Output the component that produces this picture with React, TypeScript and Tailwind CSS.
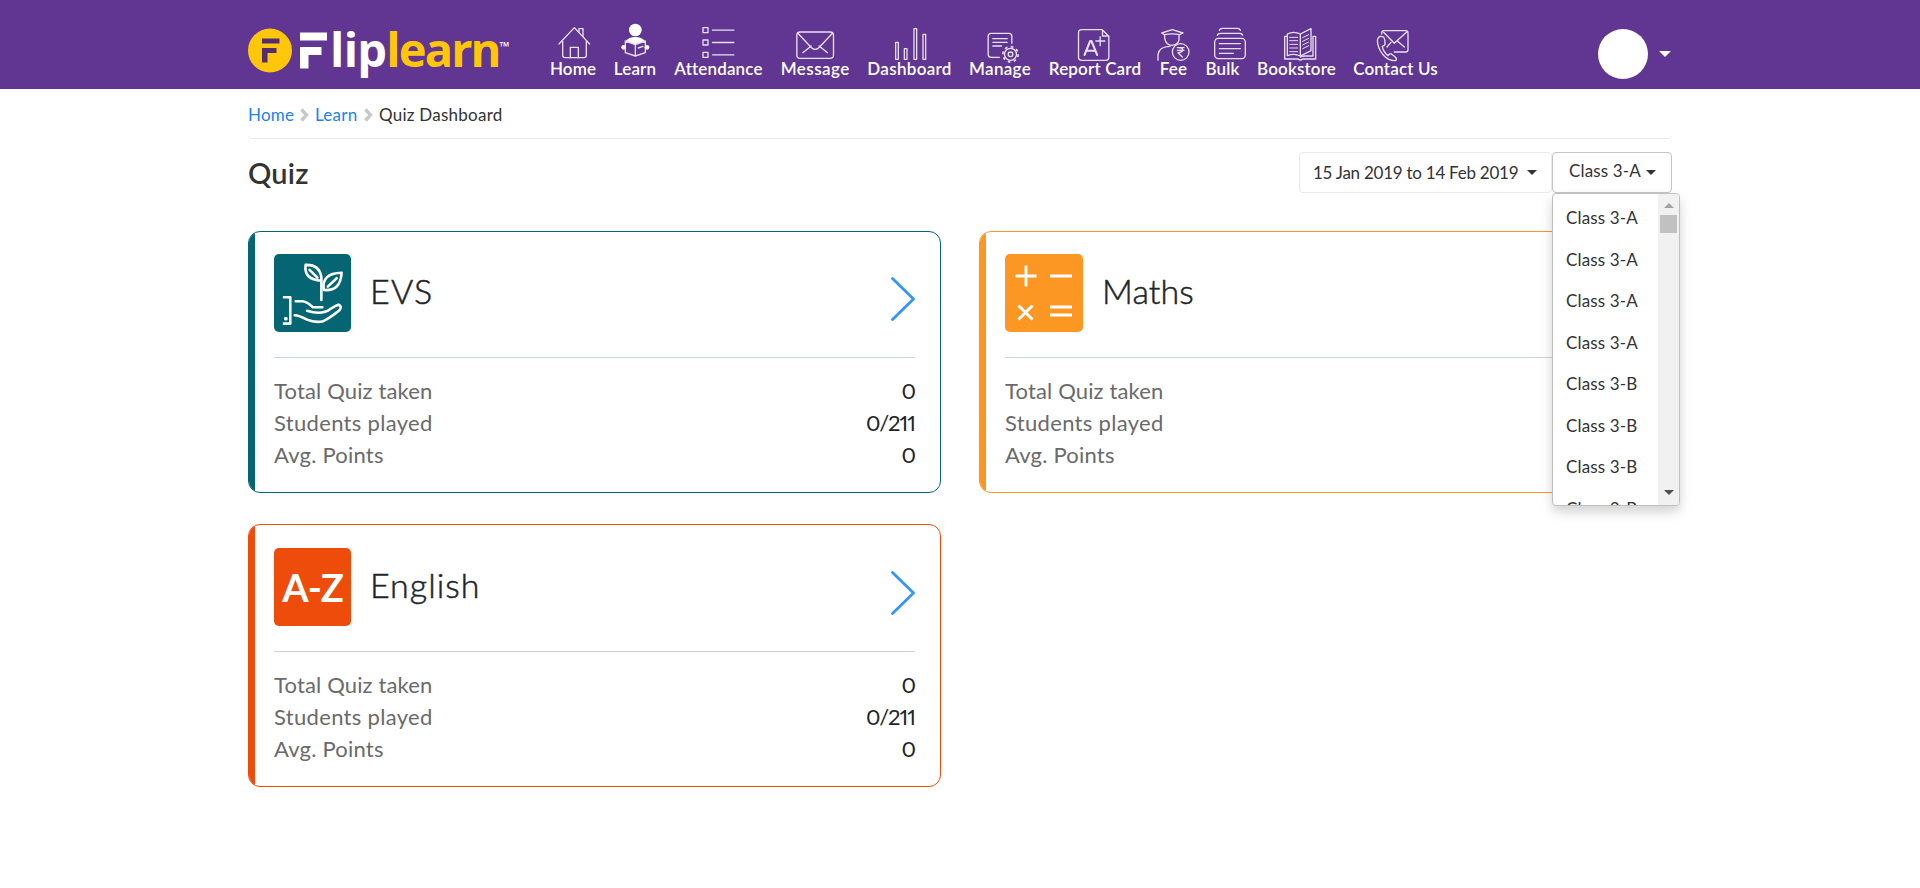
import React from "react";

type NavItem = { label: string; width: string; view: string; tracking?: string; icon: React.ReactNode };

const nav: NavItem[] = [
  {
    label: "Home",
    width: "w-[46px]",
    view: "69 42 120 120",
    icon: (
      <>
        <path d="M87 102 133 53 179 102" />
        <path d="M147 66V56h12v23" />
        <path d="M98 94v42q0 7 7 7h57q7 0 7-7V94" />
        <path d="M121 143v-31h24v31" />
      </>
    ),
  },
  {
    label: "Learn",
    width: "w-[42px]",
    view: "255 42 120 120",
    icon: (
      <>
        <circle cx="316" cy="60" r="19" fill="#fff" stroke="none" />
        <path d="M287 94q9-13 29-13t29 13l-29 9z" fill="#fff" stroke="none" />
        <path d="M286 93 316 104 346 93V128L316 138 286 128z" fill="#613592" />
        <path d="M316 104v33M325 114l14-5" />
        <circle cx="281" cy="112" r="7" fill="#fff" stroke="none" />
        <circle cx="351" cy="112" r="7" fill="#fff" stroke="none" />
      </>
    ),
  },
  {
    label: "Attendance",
    width: "w-[89px]",
    view: "505.5 42 120 120",
    icon: (
      <>
        <path d="M517.500 53h15v15h-15zM517.500 90h15v15h-15zM517.500 127h15v15h-15z" />
        <path d="M546 60.500h64M546 97.500h64M546 134.500h64" />
      </>
    ),
  },
  {
    label: "Message",
    width: "w-[68.500px]",
    view: "796.5 42 120 120",
    tracking: "tracking-[0.450px]",
    icon: (
      <>
        <rect x="802" y="66" width="110" height="79" rx="10" />
        <path d="M805 70 846 113q11 10 22 0L909 70M820 128l25-20M894 128l-25-20" />
      </>
    ),
  },
  {
    label: "Dashboard",
    width: "w-[84px]",
    view: "120 42 120 120",
    tracking: "tracking-[0.300px]",
    icon: <path d="M137 97h8v51h-8zM163 116h8v32h-8zM192 56h8v92h-8zM219 73h8v75h-8z" />,
  },
  {
    label: "Manage",
    width: "w-[61px]",
    view: "391.5 42 120 120",
    tracking: "tracking-[0.300px]",
    icon: (
      <>
        <path d="M487 100V79q0-9-9-9h-53q-9 0-9 9v54q0 9 9 9h25" />
        <path d="M430 86h43M430 97h43M430 108h26" />
        <circle cx="483" cy="133" r="18" />
        <circle cx="483" cy="133" r="7" />
        <circle cx="483" cy="133" r="23" strokeWidth="5" strokeLinecap="butt" strokeDasharray="8 10.060" />
      </>
    ),
  },
  {
    label: "Report Card",
    width: "w-[93px]",
    view: "676.5 42 120 120",
    icon: (
      <>
        <path d="M758 59h-62q-9 0-9 9v74q0 9 9 9h73q9 0 9-9V79zM759 60v18h18" />
        <path d="M705 135 722 93h4l17 42M711 122h26" strokeWidth="6" />
        <path d="M739 93h27M752 80v27" />
      </>
    ),
  },
  {
    label: "Fee",
    width: "w-[28px]",
    view: "42 42 120 120",
    icon: (
      <>
        <path d="M65 69 97 59l32 10-10 5q-23-5-46 0zM74 75v10q4 20 22 21 16-1 21-15V75" />
        <path d="M54 151v-17q2-24 36-25" />
        <circle cx="122" cy="126" r="25" fill="#613592" />
        <path d="M112 113h20M112 121h20M115 113q13 0 13 7t-14 8l13 13" />
      </>
    ),
  },
  {
    label: "Bulk",
    width: "w-[34px]",
    view: "189 42 120 120",
    icon: (
      <>
        <rect x="224" y="85" width="92" height="61" rx="11" />
        <path d="M232 76q2-6 9-6h59q6 0 8 6M238 61q2-6 9-6h46q6 0 8 6" />
        <path d="M238 101h63M238 116h63M238 130h42" />
      </>
    ),
  },
  {
    label: "Bookstore",
    width: "w-[78px]",
    view: "411 42 120 120",
    icon: (
      <>
        <path d="M442 137V72q19-10 39 0v66q-19-9-39-1zM481 72l32-16v66l-32 16" />
        <path d="M442 79h-8v68h40q7 6 14 0h39V79h-8v59h-25q-7 0-13 3" />
        <path d="M449 82h24M449 92h24M449 103h24M449 114h24M449 125h24" strokeWidth="3" />
        <path d="M488 83l18-9M488 94l18-9M488 105l18-9M488 116l18-9" strokeWidth="3" />
      </>
    ),
  },
  {
    label: "Contact Us",
    width: "w-[84px]",
    view: "708 42 120 120",
    icon: (
      <>
        <path d="M725 72v-4q0-6 7-6h65q7 0 7 7v50q0 7-7 7h-34" />
        <path d="M730 66l33 34 37-34M741 111l12-14M793 111l-20-17" />
        <path d="M719 79q-9 7-6 22 5 24 23 40 17 14 32 10 3-6-3-11l-12-9q-5 0-9 6-15-13-17-28 9-3 8-8 0-19-7-21z" />
      </>
    ),
  },
];

function Caret({ className = "" }: { className?: string }) {
  return <span className={`block h-0 w-0 border-x-[5px] border-t-[5px] border-x-transparent ${className}`} />;
}

function Header() {
  return (
    <header className="h-[89px] bg-[#613592]">
      <div className="mx-auto flex w-[1424px] items-start">
        <div className="flex h-[89px] w-[302px] shrink-0 items-start pt-7">
          <svg width="82" height="46" viewBox="0 0 82 46" className="shrink-0">
            <circle cx="22" cy="22.500" r="22" fill="#ffc60a" />
            <path d="M14 10.500h17.500v5H14zM14 20h14.500v5H19.500v9.500H14z" fill="#552d6e" />
            <path d="M52 4.500h27v8H52zM52 19h21.500v8H60.500v13.500H52z" fill="#fff" />
          </svg>
          <div className="-mt-[6px] flex items-start whitespace-nowrap font-['Open_Sans',sans-serif] text-[47px] font-bold leading-[54px] -tracking-[0.700px] text-white">
            <span>lip</span>
            <span className="-tracking-[1.900px] text-[#ffc60a]">learn</span>
            <span className="mt-[14px] text-[13px] leading-[20px] tracking-normal">™</span>
          </div>
        </div>
        <nav className="flex gap-[18px] pt-6">
          {nav.map((n) => (
            <a key={n.label} className={`flex flex-col items-center ${n.width}`}>
              <svg
                width="40"
                height="40"
                viewBox={n.view}
                fill="none"
                stroke="#e8e0f1"
                strokeWidth="4"
                strokeLinecap="round"
                strokeLinejoin="round"
                className="shrink-0 overflow-visible"
              >
                {n.icon}
              </svg>
              <span className={`-mt-[5px] whitespace-nowrap text-[17px] font-semibold leading-5 text-white ${n.tracking ?? "tracking-[0.150px]"}`}>
                {n.label}
              </span>
            </a>
          ))}
        </nav>
        <div className="ml-auto mr-px flex items-center gap-[11px] pt-[29px]">
          <span className="h-[50px] w-[50px] rounded-full bg-white" />
          <span className="block h-0 w-0 border-x-[6px] border-t-[6px] border-x-transparent border-t-white" />
        </div>
      </div>
    </header>
  );
}

function Chevron() {
  return (
    <svg width="9" height="14" viewBox="0 0 9 14" fill="none" stroke="#c8c8c8" strokeWidth="3.400">
      <path d="M1.500 1.500 6.500 7 1.500 12.500" />
    </svg>
  );
}

function Breadcrumb() {
  return (
    <div className="flex h-[50px] items-center rounded border-b border-[#e9ecec] pt-[2px] text-[17px] tracking-[0.250px] text-[#333]">
      <a className="w-[52px] text-[#2080f5]">Home</a>
      <Chevron />
      <a className="ml-[6px] w-[49px] text-[#2080f5]">Learn</a>
      <Chevron />
      <span className="ml-[6px]">Quiz Dashboard</span>
    </div>
  );
}

const classes = ["Class 3-A", "Class 3-A", "Class 3-A", "Class 3-A", "Class 3-B", "Class 3-B", "Class 3-B", "Class 3-B"];

function ClassMenu() {
  return (
    <div className="absolute left-0 top-[41px] z-10 flex h-[313px] w-[128px] overflow-hidden rounded border border-[#c0c0c0] bg-white shadow-[0_6px_12px_rgba(0,0,0,0.175)]">
      <ul className="flex-1 overflow-hidden pt-[3px]">
        {classes.map((c, i) => (
          <li key={i} className="h-[41.500px] whitespace-nowrap pl-[13px] leading-[41.500px]">
            {c}
          </li>
        ))}
      </ul>
      <div className="flex w-[21px] flex-col items-center bg-[#f1f1f1]">
        <span className="mt-[9px] block h-0 w-0 border-x-[5px] border-b-[5px] border-x-transparent border-b-[#a3a3a3]" />
        <span className="mt-[7px] h-[18px] w-[17px] bg-[#c1c1c1]" />
        <Caret className="mb-[10px] mt-auto border-t-[#505050]" />
      </div>
    </div>
  );
}

function TitleBar() {
  return (
    <div className="flex h-[92px] items-start justify-between pt-[13px] text-[#333]">
      <h1 className="pt-px text-[29px] font-semibold leading-10 tracking-[0.200px]">Quiz</h1>
      <div className="flex text-[17px]">
        <div className="flex h-[41px] w-[253px] items-center rounded border border-[#e9e9e9] pl-[13px]">
          <span className="w-[214px] whitespace-nowrap pt-px -tracking-[0.250px]">15 Jan 2019 to 14 Feb 2019</span>
          <Caret className="border-t-[#333]" />
        </div>
        <div className="relative h-[41px] w-[120px] tracking-[0.150px]">
          <div className="flex h-full items-center rounded border border-[#c4c4c4] bg-white pb-[3px] pl-4">
            <span className="w-[77px]">Class 3-A</span>
            <Caret className="mt-[3px] border-t-[#333]" />
          </div>
          <ClassMenu />
        </div>
      </div>
    </div>
  );
}

const EvsIcon = (
  <svg viewBox="0 0 78 78" className="h-full w-full" fill="none" stroke="#fff" strokeWidth="2.600" strokeLinecap="round" strokeLinejoin="round">
    <path d="M48 46V23Q46 10 32 10.500q-2 15 16 16M36 15.500l8 8" />
    <path d="M50.500 36q-3-17 18-17.500-1 19-18 17.500zM54.500 32.500l9-8.500" />
    <path d="M9 43.300h7.500V70H9" strokeLinecap="butt" />
    <circle cx="12" cy="65" r="1.900" fill="#fff" stroke="none" />
    <path d="M22 47.300h7Q34 48 39.500 53.500H49M33.500 57q15 5 24-2 5-3.500 8-4.200 4 2 .5 6-8.500 7-16 10.700-8 2-16.500-1.500Q25 61.500 21 61.500" />
  </svg>
);

const MathsIcon = (
  <svg viewBox="0 0 78 78" className="h-full w-full" fill="none" stroke="#fff" strokeWidth="2.900">
    <path d="M10.500 22h21M21 11.500v21M45 22h22M45 53h22M45 61h22M13.500 51.500l14 14M27.500 51.500l-14 14" />
  </svg>
);

type Subject = {
  name: string;
  frame: string;
  fill: string;
  pad: string;
  tileWidth: string;
  tracking: string;
  icon: React.ReactNode;
  values: string[];
};

const subjects: Subject[] = [
  {
    name: "EVS",
    frame: "h-[262px] border-[#066572]",
    fill: "bg-[#066572]",
    pad: "pt-[22px]",
    tileWidth: "w-[77px]",
    tracking: "tracking-[1.200px]",
    icon: EvsIcon,
    values: ["0", "0/211", "0"],
  },
  {
    name: "Maths",
    frame: "h-[262px] border-[#fb9722]",
    fill: "bg-[#fb9722]",
    pad: "pt-[22px]",
    tileWidth: "w-[78px]",
    tracking: "tracking-[0.100px]",
    icon: MathsIcon,
    values: [],
  },
  {
    name: "English",
    frame: "h-[263px] border-[#ee4c0a]",
    fill: "bg-[#ee4c0a]",
    pad: "pt-[23px]",
    tileWidth: "w-[77px]",
    tracking: "tracking-[1px]",
    icon: <span className="whitespace-nowrap text-[38px] font-bold leading-none -tracking-[1px] text-white">A-Z</span>,
    values: ["0", "0/211", "0"],
  },
];

const labels = [
  { text: "Total Quiz taken", tracking: "tracking-[0.150px]" },
  { text: "Students played", tracking: "tracking-[0.320px]" },
  { text: "Avg. Points", tracking: "tracking-[0.220px]" },
];

function Card({ s }: { s: Subject }) {
  return (
    <section className={`flex overflow-hidden rounded-xl border bg-white ${s.frame}`}>
      <div className={`w-[6px] shrink-0 ${s.fill}`} />
      <div className={`flex-1 pl-[19px] pr-[25px] ${s.pad}`}>
        <div className="flex h-[104px] items-start border-b border-[#c9d5dc]">
          <div className={`flex h-[78px] shrink-0 items-center justify-center rounded-[5px] ${s.tileWidth} ${s.fill}`}>{s.icon}</div>
          <h2 className={`ml-[19px] pt-[16px] text-[34px] font-light leading-[42px] text-[#212529] [-webkit-text-stroke:0.5px_#212529] ${s.tracking}`}>
            {s.name}
          </h2>
          <svg width="24" height="44" viewBox="0 0 24 44" className="ml-auto mt-[23px]" fill="none" stroke="#3296fa" strokeWidth="2.800" strokeLinecap="round" strokeLinejoin="round">
            <path d="M1.500 1.500 22.500 22 1.500 42.500" />
          </svg>
        </div>
        <dl className="pt-[17px] text-[22px] leading-8">
          {labels.map((label, i) => (
            <div key={label.text} className="flex justify-between">
              <dt className={`text-[#6a6a6a] ${label.tracking}`}>{label.text}</dt>
              {s.values[i] && <dd className="text-right proportional-nums -tracking-[1px] text-[#212529]">{s.values[i]}</dd>}
            </div>
          ))}
        </dl>
      </div>
    </section>
  );
}

export default function App() {
  return (
    <div className="min-h-[888px] bg-white font-['Lato','Liberation_Sans',sans-serif]">
      <Header />
      <main className="mx-auto w-[1424px]">
        <Breadcrumb />
        <TitleBar />
        <div className="grid grid-cols-[693px_693px] gap-x-[38px] gap-y-[31px]">
          {subjects.map((s) => (
            <Card key={s.name} s={s} />
          ))}
        </div>
      </main>
    </div>
  );
}
